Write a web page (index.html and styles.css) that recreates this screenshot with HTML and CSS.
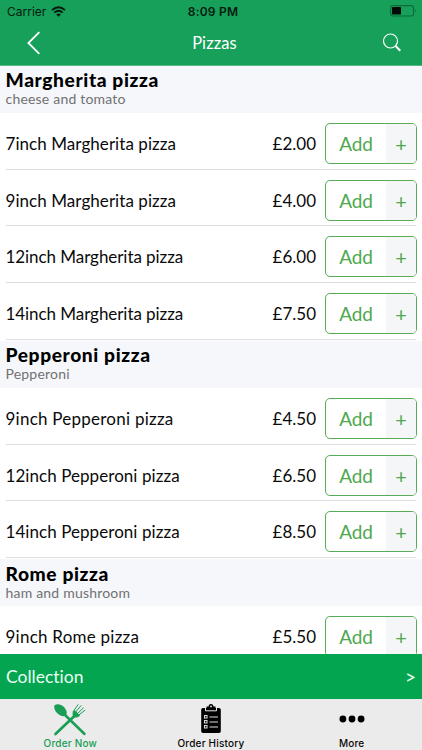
FILE: index.html
```
<!DOCTYPE html>
<html lang="en">
<head>
<meta charset="utf-8">
<title>Pizzas</title>
<link rel="stylesheet" href="styles.css">
</head>
<body>
<div class="app">
  <header class="top">
    <div class="status">
      <span class="carrier">Carrier
        <svg width="15" height="11" viewBox="0 0 15 11" fill="none" stroke="#061a0e" stroke-width="1.9"><path d="M1 4.1Q7.5-1.6 14 4.1M3.3 6.6Q7.5 3 11.7 6.6"/><path d="M5.2 8.4Q7.5 6.6 9.8 8.4L7.5 10.7Z" fill="#061a0e" stroke="none"/></svg>
      </span>
      <span class="clock">8:09 PM</span>
      <svg class="battery" width="27" height="12" viewBox="0 0 27 12"><rect x=".6" y=".6" width="23" height="10.4" rx="2.4" fill="none" stroke="#0a6b38" stroke-width="1.1"/><rect x="2" y="2" width="9" height="7.6" rx=".8" fill="#020a05"/><path d="M25 4q1.6 1.8 0 3.6z" fill="#0a6b38"/></svg>
    </div>
    <nav class="bar">
      <svg class="back" width="14" height="24" viewBox="0 0 14 24" fill="none" stroke="#fff" stroke-width="1.8"><path d="M12.3 1.2 1.4 12 12.3 22.8"/></svg>
      <h1>Pizzas</h1>
      <svg class="search" width="20" height="20" viewBox="0 0 20 20" fill="none" stroke="#fff"><circle cx="8.5" cy="8" r="7" stroke-width="1.2"/><path d="m13.300 12.800 5 5" stroke-width="2"/></svg>
    </nav>
  </header>
  <main class="menu">
    <section>
      <div class="head"><h2>Margherita pizza</h2><p>cheese and tomato</p></div>
      <div class="row"><span class="name">7inch Margherita pizza</span><span class="price">£2.00</span><button><b>Add</b><i>+</i></button></div>
      <div class="row"><span class="name">9inch Margherita pizza</span><span class="price">£4.00</span><button><b>Add</b><i>+</i></button></div>
      <div class="row"><span class="name tight">12inch Margherita pizza</span><span class="price">£6.00</span><button><b>Add</b><i>+</i></button></div>
      <div class="row"><span class="name tight">14inch Margherita pizza</span><span class="price">£7.50</span><button><b>Add</b><i>+</i></button></div>
    </section>
    <section>
      <div class="head"><h2>Pepperoni pizza</h2><p>Pepperoni</p></div>
      <div class="row"><span class="name loose">9inch Pepperoni pizza</span><span class="price">£4.50</span><button><b>Add</b><i>+</i></button></div>
      <div class="row"><span class="name">12inch Pepperoni pizza</span><span class="price">£6.50</span><button><b>Add</b><i>+</i></button></div>
      <div class="row"><span class="name">14inch Pepperoni pizza</span><span class="price">£8.50</span><button><b>Add</b><i>+</i></button></div>
    </section>
    <section>
      <div class="head"><h2>Rome pizza</h2><p>ham and mushroom</p></div>
      <div class="row"><span class="name loose">9inch Rome pizza</span><span class="price">£5.50</span><button><b>Add</b><i>+</i></button></div>
    </section>
  </main>
  <div class="collection"><span>Collection</span><span class="go">&gt;</span></div>
  <footer class="tabs">
    <div class="tab active">
      <svg width="34" height="34" viewBox="0 0 34 34" fill="none" stroke="#1a9e56" stroke-linecap="round"><path d="M10.500 10.500 31.500 31" stroke-width="2.500"/><path d="M2.500 31 23.500 11" stroke-width="2.700"/><path d="M1.800 2C4.600.2 9.400 1.600 12 5.200c2.200 3 2.400 5.800.5 7.200-2 1.500-5 .8-7.600-1.600C1.600 7.800.4 3.800 1.800 2Z" fill="#1a9e56" stroke="none"/><path d="m20 9 5-7.300M22.300 9.500l5.700-6.800M24 11l6.400-6.100M25 12.700l7-5.500" stroke-width="1"/><path d="m21.500 7 5.500 5.500c-2 2.200-4.900 2.700-6.500 1.200s-1.200-4.500 1-6.700Z" fill="#1a9e56" stroke="none"/></svg>
      <span>Order Now</span>
    </div>
    <div class="tab">
      <svg width="34" height="34" viewBox="0 0 34 34"><path d="M9 5h3.500V3.500h2C14.700 1.800 15.600 1 17 1s2.300.8 2.500 2.500h2V5H25a1.800 1.800 0 0 1 1.800 1.800v21.400A1.800 1.800 0 0 1 25 30H9a1.800 1.800 0 0 1-1.800-1.800V6.800A1.800 1.800 0 0 1 9 5Z"/><path d="M11.500 5v2.800h11V5" fill="none" stroke="#ebebeb"/><circle cx="17" cy="3.400" r=".9" fill="#ebebeb"/><g fill="none" stroke="#ddd"><path d="M10.500 12.500h2.500v2.500h-2.500zM10.500 17.500h2.500v2.500h-2.500zM10.500 22.500h2.500v2.500h-2.500zM15.500 14H24M15.500 19H24M15.500 24H24" stroke-width="1.100"/></g></svg>
      <span>Order History</span>
    </div>
    <div class="tab">
      <svg width="34" height="34" viewBox="0 0 34 34"><circle cx="7.900" cy="16" r="3.400"/><circle cx="17" cy="16" r="3.400"/><circle cx="26.100" cy="16" r="3.400"/></svg>
      <span>More</span>
    </div>
  </footer>
</div>
</body>
</html>
```
FILE: styles.css
```
* { box-sizing: border-box; margin: 0; }
body { font-family: Lato, "Open Sans", sans-serif; font-variant-ligatures: none; color: #0a0a0a; background: #fff; }
svg { display: block; flex: none; }
.app { width: 422px; height: 750px; display: flex; flex-direction: column; overflow: hidden; }
.top { height: 66px; flex: none; background: #16a05a; border-bottom: 1px solid #58b987; }
.status { height: 22px; display: grid; grid-template-columns: 1fr auto 1fr; align-items: center; padding: 0 5px 0 7px; font-family: Inter, sans-serif; font-size: 12px; color: #061a0e; }
.carrier { display: flex; align-items: center; gap: 5px; letter-spacing: 0; }
.clock { font-weight: 600; letter-spacing: .2px; padding-left: 2px; }
.battery { justify-self: end; }
.bar { height: 42px; display: grid; grid-template-columns: 1fr auto 1fr; align-items: center; padding: 0 20px 0 27px; color: #fff; }
.bar h1 { font-size: 16.5px; font-weight: 400; letter-spacing: .1px; }
.search { justify-self: end; }
.menu { flex: 1; min-height: 0; overflow: hidden; }
section { padding-bottom: 1.3px; }
.head { height: 47px; background: #f6f7fa; padding: 2.4px 5.5px 0; }
.head h2 { font-size: 19.2px; line-height: 23px; font-weight: 900; letter-spacing: .6px; color: #000; }
.head p { font-size: 14px; line-height: 15px; letter-spacing: .2px; color: #707173; }
.row { height: 56.67px; margin: 0 6px 0 5.5px; border-bottom: 1px solid #dedede; display: grid; grid-template-columns: 1fr auto 91px; align-items: start; column-gap: 9px; font-size: 17px; }
.name, .price { line-height: 61px; white-space: nowrap; }
.name { letter-spacing: .06px; }
.name.tight { letter-spacing: -.06px; }
.name.loose { letter-spacing: .24px; }
.row button { margin-top: 10px; width: 91.5px; height: 41px; padding: 0; display: grid; grid-template-columns: 60px 30px; border: 1px solid #58ac58; border-radius: 5px; overflow: hidden; background: #fff; color: #4ea84e; font-family: inherit; }
.row b, .row i { font-weight: 400; font-style: normal; }
.row b { font-size: 19px; line-height: 39px; letter-spacing: -.2px; }
.row i { font-size: 20px; line-height: 40px; background: #f5f6f8; }
.collection { height: 45px; flex: none; background: #03a550; color: #e9fff2; display: flex; align-items: center; justify-content: space-between; padding: 0 6px; font-size: 17.5px; line-height: 20px; }
.go { font-size: 19px; }
.tabs { height: 51px; flex: none; background: #ebebeb; display: grid; grid-template-columns: repeat(3, 1fr); padding-top: 4px; }
.tab { display: flex; flex-direction: column; align-items: center; font: 500 10px/12px Inter, sans-serif; letter-spacing: .2px; color: #080808; }
.active { color: #1a9e56; }
```
